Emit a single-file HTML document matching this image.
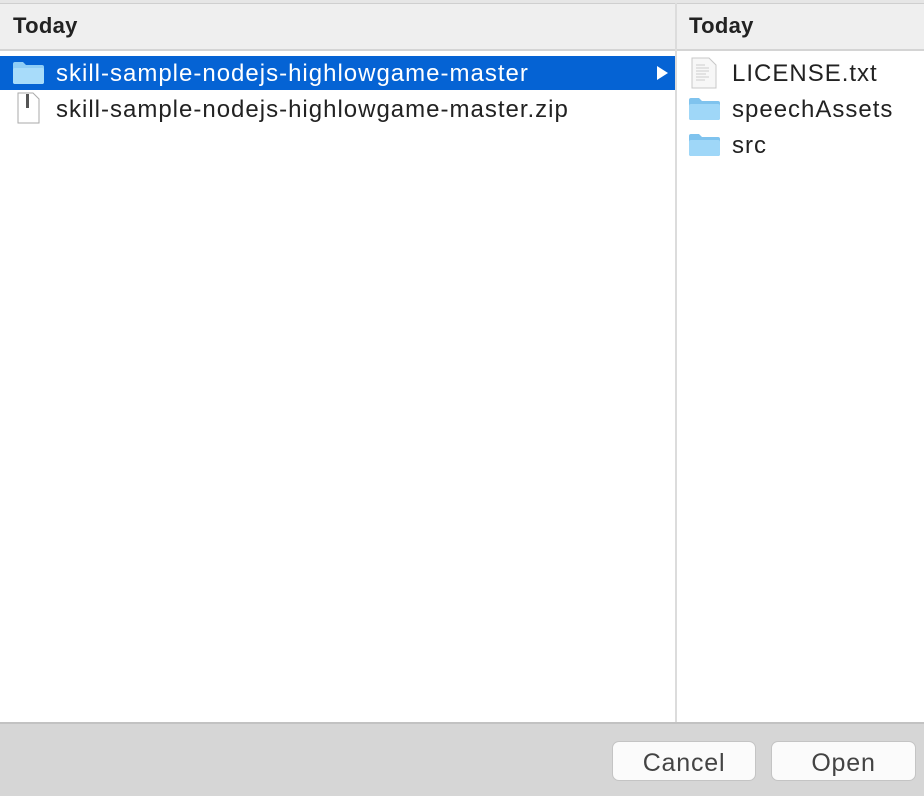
<!DOCTYPE html>
<html><head><style>
body{margin:0;width:924px;height:796px;background:#fff;font-family:"Liberation Sans",sans-serif;position:relative;overflow:hidden}
.a{position:absolute}
.hdr{top:3px;height:45px;background:#efefef;border-top:1px solid #cfcfcf;border-bottom:2px solid #d4d4d4}
.ht{font-weight:bold;font-size:22px;color:#222;top:13px;letter-spacing:0.3px}
.row{font-size:24px;letter-spacing:1px;color:#222;height:34px;line-height:34px}
.btn{top:741px;height:40px;background:#fbfbfb;border:1px solid #c4c4c4;border-radius:7px;font-size:25px;letter-spacing:0.8px;color:#444;text-align:center;line-height:42px;box-sizing:border-box}
</style></head><body>
<div class="a" style="left:0;top:0;width:924px;height:3px;background:#e6e6e6"></div>
<div class="a hdr" style="left:0;width:675px"></div>
<div class="a hdr" style="left:677px;width:247px"></div>
<div class="a ht" style="left:13px">Today</div>
<div class="a ht" style="left:689px">Today</div>
<div class="a" style="left:675px;top:3px;width:2px;height:720px;background:#dcdcdc"></div>
<div class="a row" style="left:0;top:56px;width:675px;background:#0563d4;color:#fff"></div>
<svg class="a" style="left:12px;top:61px" width="33" height="24"><path d="M1 3q0-2 2-2h8l3 3h16q2 0 2 2v15q0 2-2 2H3q-2 0-2-2z" fill="#8fcdf5"/><rect x="1" y="7" width="31" height="16" rx="2" fill="#a8dcfa"/></svg>
<div class="a row" style="left:56px;top:57px;color:#fff">skill-sample-nodejs-highlowgame-master</div>
<svg class="a" style="left:656px;top:65px" width="14" height="16"><path d="M1 1L12 8L1 15z" fill="#fff"/></svg>
<svg class="a" style="left:17px;top:92px" width="24" height="32"><path d="M1 1h15l6 6v24H1z" fill="#fff" stroke="#aaa"/><rect x="9" y="2" width="3" height="14" fill="#555"/></svg>
<div class="a row" style="left:56px;top:93px">skill-sample-nodejs-highlowgame-master.zip</div>
<svg class="a" style="left:691px;top:57px" width="26" height="32"><path d="M1 1h17l7 7v23H1z" fill="#f7f7f7" stroke="#c8c8c8"/><path d="M5 8h9M5 11h13M5 14h13M5 17h10M5 20h13M5 23h9" stroke="#ccc"/></svg>
<div class="a row" style="left:732px;top:57px">LICENSE.txt</div>
<svg class="a" style="left:688px;top:97px" width="33" height="24"><path d="M1 3q0-2 2-2h8l3 3h16q2 0 2 2v15q0 2-2 2H3q-2 0-2-2z" fill="#7fc3ee"/><rect x="1" y="7" width="31" height="16" rx="2" fill="#9fd7f8"/></svg>
<div class="a row" style="left:732px;top:93px">speechAssets</div>
<svg class="a" style="left:688px;top:133px" width="33" height="24"><path d="M1 3q0-2 2-2h8l3 3h16q2 0 2 2v15q0 2-2 2H3q-2 0-2-2z" fill="#7fc3ee"/><rect x="1" y="7" width="31" height="16" rx="2" fill="#9fd7f8"/></svg>
<div class="a row" style="left:732px;top:129px">src</div>
<div class="a" style="left:0;top:722px;width:924px;height:74px;background:#d6d6d6;border-top:2px solid #c2c2c2;box-sizing:border-box"></div>
<div class="a btn" style="left:612px;width:144px">Cancel</div>
<div class="a btn" style="left:771px;width:145px">Open</div>
</body></html>
